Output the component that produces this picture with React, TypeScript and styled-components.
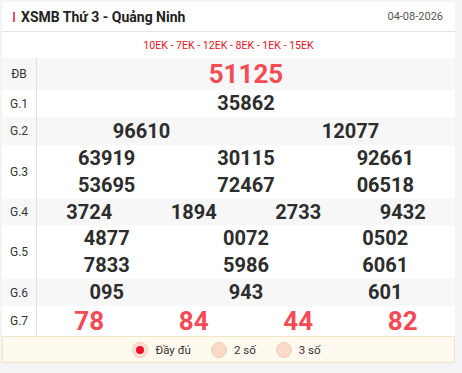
import React from "react";
import styled, { createGlobalStyle } from "styled-components";

const Global = createGlobalStyle`
  html, body { margin: 0; padding: 0; background: #f4f4f6; }
  body { font-family: Roboto, "Liberation Sans", Arial, sans-serif; }
`;

const Card = styled.div`
  margin: 2px 7px 0 2px;
  background: #fff;
  width: 453px;
`;

const Header = styled.div`
  display: flex;
  align-items: center;
  justify-content: space-between;
  height: 29px;
  padding: 0 12px 0 11px;
  border-bottom: 1px solid #e4e4e4;
`;

const Title = styled.h2`
  margin: 0;
  display: flex;
  align-items: center;
  gap: 6px;
  font-size: 14px;
  font-weight: 700;
  color: #222;
  &::before {
    content: "";
    width: 2px;
    height: 10px;
    background: #f0505a;
  }
`;

const DateText = styled.span`
  font-size: 11px;
  color: #555;
`;

const Codes = styled.div`
  height: 26px;
  display: flex;
  align-items: center;
  justify-content: center;
  font-size: 10.6px;
  color: #e8121c;
`;

const Row = styled.div<{ $alt?: boolean }>`
  display: grid;
  grid-template-columns: 35px 1fr;
  background: ${(p) => (p.$alt ? "#f7f7f8" : "#fff")};
`;

const Label = styled.div`
  display: flex;
  align-items: center;
  justify-content: center;
  border-right: 1px solid #dedede;
  font-size: 12px;
  color: #333;
`;

const Nums = styled.div<{ $cols: number }>`
  display: grid;
  grid-template-columns: repeat(${(p) => p.$cols}, 1fr);
`;

const Num = styled.div<{ $size?: number; $lh?: number; $red?: boolean }>`
  text-align: center;
  font-weight: 700;
  font-size: ${(p) => p.$size ?? 20}px;
  line-height: ${(p) => p.$lh ?? 27}px;
  color: ${(p) => (p.$red ? "#f64a55" : "#2d2d2d")};
`;

const Footer = styled.div`
  height: 25px;
  border: 1px solid #f4e3c4;
  background: #fffaf0;
  display: flex;
  align-items: center;
  justify-content: center;
  gap: 20px;
  padding-right: 4px;
`;

const Option = styled.label`
  display: flex;
  align-items: center;
  gap: 7px;
  font-size: 11.5px;
  color: #333;
`;

const Dot = styled.span<{ $on?: boolean }>`
  width: 14px;
  height: 14px;
  border-radius: 50%;
  border: 1px solid #f3cdb5;
  background: ${(p) => (p.$on ? "#fbe1d2" : "#f8dac6")};
  display: flex;
  align-items: center;
  justify-content: center;
  &::after {
    content: "";
    display: ${(p) => (p.$on ? "block" : "none")};
    width: 8px;
    height: 8px;
    border-radius: 50%;
    background: #f3112a;
  }
`;

type Prize = { label: string; cols: number; nums: string[]; size?: number; lh?: number; red?: boolean };

const prizes: Prize[] = [
  { label: "ĐB", cols: 1, nums: ["51125"], size: 26, lh: 32, red: true },
  { label: "G.1", cols: 1, nums: ["35862"] },
  { label: "G.2", cols: 2, nums: ["96610", "12077"], lh: 28 },
  { label: "G.3", cols: 3, nums: ["63919", "30115", "92661", "53695", "72467", "06518"] },
  { label: "G.4", cols: 4, nums: ["3724", "1894", "2733", "9432"], lh: 26 },
  { label: "G.5", cols: 3, nums: ["4877", "0072", "0502", "7833", "5986", "6061"] },
  { label: "G.6", cols: 3, nums: ["095", "943", "601"] },
  { label: "G.7", cols: 4, nums: ["78", "84", "44", "82"], size: 26, lh: 30, red: true },
];

export default function App() {
  return (
    <>
      <Global />
      <Card>
        <Header>
          <Title>XSMB Thứ 3 - Quảng Ninh</Title>
          <DateText>04-08-2026</DateText>
        </Header>
        <Codes>10EK - 7EK - 12EK - 8EK - 1EK - 15EK</Codes>
        {prizes.map((p, i) => (
          <Row key={p.label} $alt={i % 2 === 0}>
            <Label>{p.label}</Label>
            <Nums $cols={p.cols}>
              {p.nums.map((n, j) => (
                <Num key={j} $size={p.size} $lh={p.lh} $red={p.red}>
                  {n}
                </Num>
              ))}
            </Nums>
          </Row>
        ))}
        <Footer>
          <Option>
            <Dot $on />
            Đầy đủ
          </Option>
          <Option>
            <Dot />2 số
          </Option>
          <Option>
            <Dot />3 số
          </Option>
        </Footer>
      </Card>
    </>
  );
}
